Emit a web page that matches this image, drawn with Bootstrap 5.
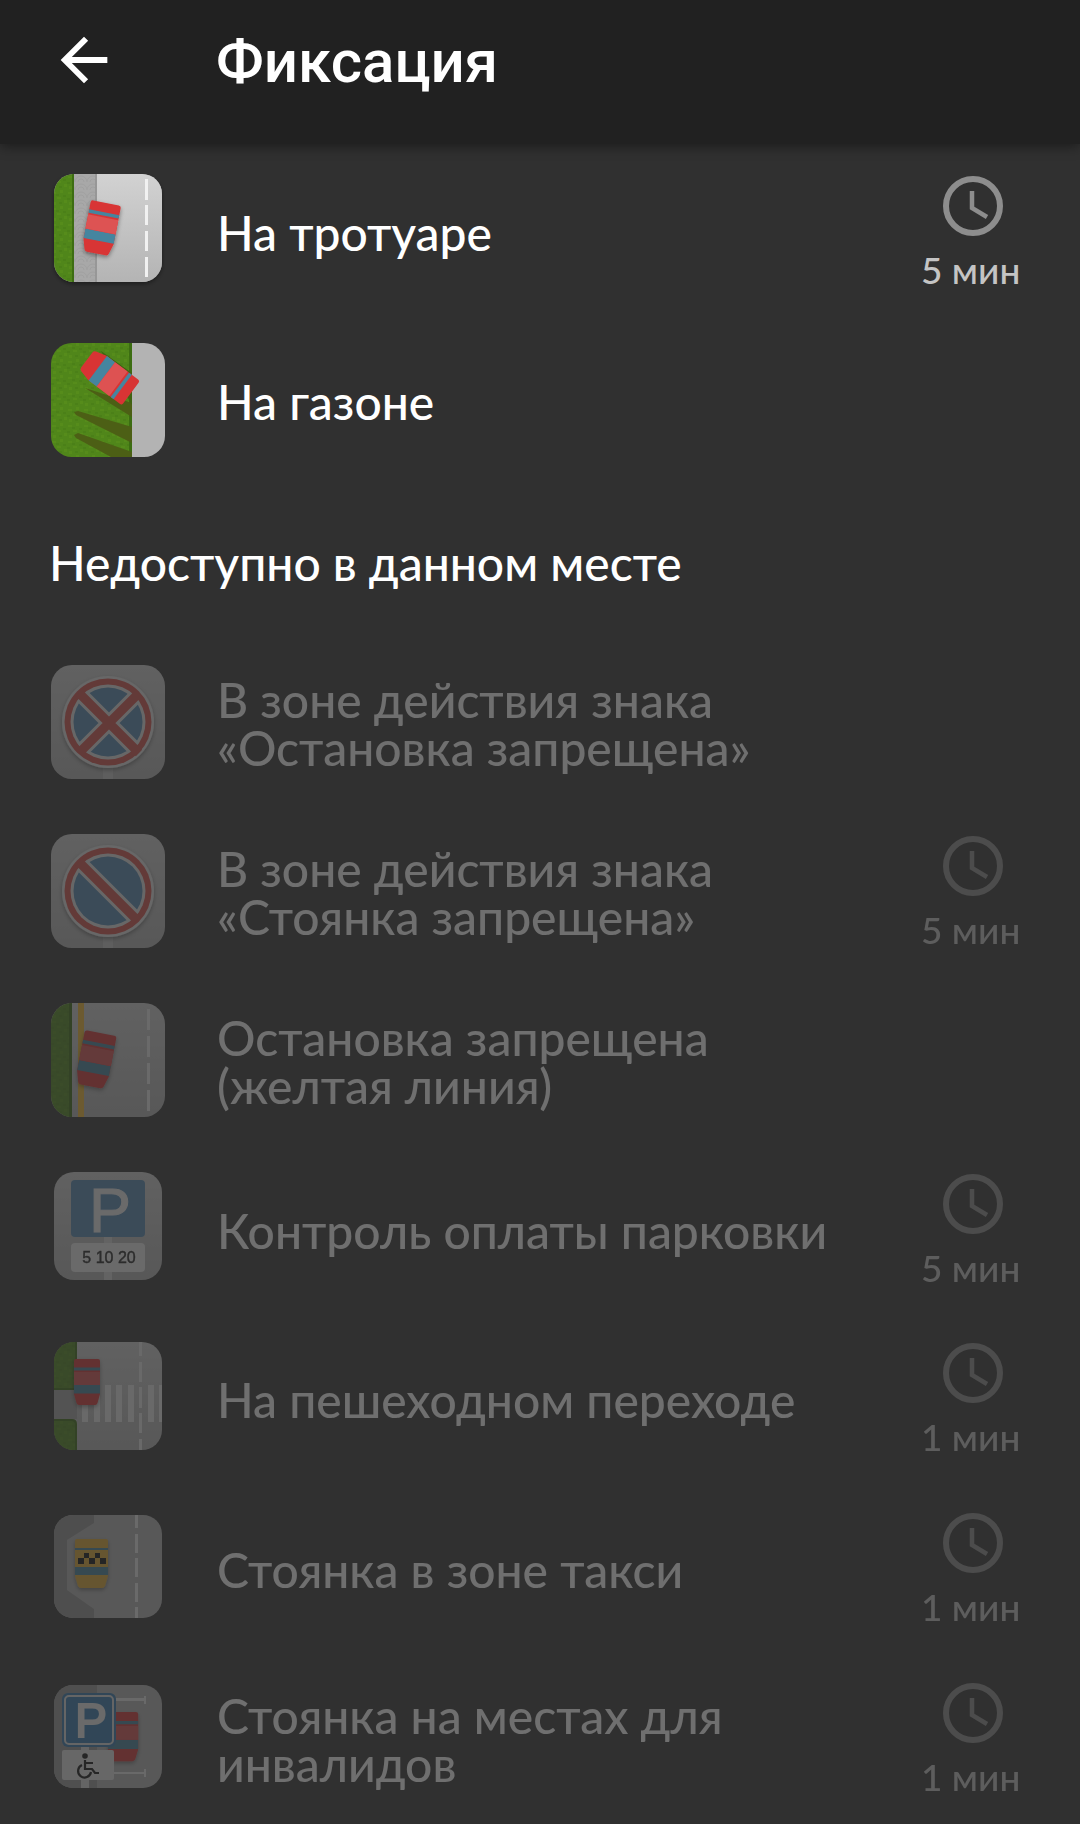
<!DOCTYPE html>
<html lang="ru" data-bs-theme="dark">
<head>
<meta charset="utf-8">
<meta name="viewport" content="width=device-width, initial-scale=1">
<title>Фиксация</title>
<link rel="stylesheet" href="https://cdn.jsdelivr.net/npm/bootstrap@5.3.0/dist/css/bootstrap.min.css">
<style>
body { background: #303030; color: #fff; font-family: Lato, "Noto Sans", sans-serif; }
.topbar { background: #212121; height: 144px; padding: 0 49px 24px; box-shadow: 0 2px 12px rgba(0,0,0,.45); position: relative; }
.topbar h1 { font: 500 60px/72px Roboto, sans-serif; margin-left: 97px; padding-top: 4px; }
.back-btn { width: 70px; height: 70px; }
.violations { padding-top: 3px; }
.violations .list-group-item { height: 169px; padding: 2px 56px 0 51px; background: transparent; color: #fff; }
.violations .tall { height: 170px; }
.violations .list-group-item:disabled { opacity: .3; }
.tile { width: 114px; height: 114px; margin-top: 25px; }
.caption-text { font-size: 48px; line-height: 48px; font-weight: 500; margin-left: 52px; }
.limit { width: 103px; font-size: 37px; line-height: 44px; font-weight: 500; color: #c4c4c4; padding-top: 2px; }
.limit svg { color: #8d8d8d; margin-bottom: 12px; }
.section-title { font-size: 48px; line-height: 57px; font-weight: 500; padding: 49px 49px 47px; }
</style>
<script src="https://cdn.jsdelivr.net/npm/bootstrap@5.3.0/dist/js/bootstrap.bundle.min.js"></script>
</head>
<body>
<svg width="0" height="0" class="position-absolute" aria-hidden="true">
  <defs>
    <linearGradient id="road" x1="0" y1="0" x2="0" y2="1"><stop offset="0" stop-color="#d2d2d2"/><stop offset="1" stop-color="#b4b4b4"/></linearGradient>
    <pattern id="grass" width="16" height="16" patternUnits="userSpaceOnUse">
      <rect width="16" height="16" fill="#50861a"/>
      <path d="M1 2h4v2H1zM9 0h3v3H9zM6 7h4v2H6zM13 10h3v3h-3zM2 12h3v3H2z" fill="#568c1b"/>
      <path d="M5 4h3v2H5zM12 5h3v2h-3zM0 8h3v2H0zM8 12h3v2H8z" fill="#4b8018"/>
    </pattern>
    <pattern id="paving" width="12" height="8" patternUnits="userSpaceOnUse">
      <rect width="12" height="8" fill="#a8a8a8"/>
      <path d="M0 8a6 6 0 0 1 12 0M3 8a3 3 0 0 1 6 0" fill="none" stroke="#a0a0a0"/>
    </pattern>
    <clipPath id="full"><rect width="114" height="114" rx="21"/></clipPath>
    <clipPath id="inset"><rect x="3" width="108" height="108" rx="20"/></clipPath>
    <clipPath id="inset-low"><rect x="3" y="1" width="108" height="108" rx="20"/></clipPath>
    <clipPath id="inset-short"><rect x="3" y="4" width="108" height="103" rx="19"/></clipPath>
    <clipPath id="disc"><circle cx="57" cy="57" r="37"/></clipPath>
    <filter id="soft" x="-30%" y="-30%" width="160%" height="160%"><feDropShadow dx="0" dy="2" stdDeviation="2" flood-opacity=".4"/></filter>
    <g id="car">
      <path d="M2 0H24Q26 0 26 2V35L23.500 44Q23 46 21 46H5Q3 46 2.500 44L0 35V2Q0 0 2 0Z" fill="#d83434"/>
      <path d="M0 8.500H26V11.500H0ZM0 26H26V34.500H0Z" fill="#45859f"/>
      <path d="M0 13H26V26H0Z" fill="#dd5252"/>
    </g>
    <symbol id="clock" viewBox="0 0 60 60">
      <circle cx="30" cy="30" r="27" fill="none" stroke="currentColor" stroke-width="6"/>
      <path d="M29 15V32L44 41" fill="none" stroke="currentColor" stroke-width="4.500"/>
    </symbol>
  </defs>
</svg>

<header class="topbar d-flex align-items-center">
  <button type="button" class="back-btn btn border-0 p-0 d-flex" aria-label="Назад">
    <svg width="70" height="70" viewBox="0 0 24 24" fill="#fff"><path d="M20 11H7.830l5.590-5.590L12 4l-8 8 8 8 1.410-1.410L7.830 13H20v-2z"/></svg>
  </button>
  <h1 class="mb-0">Фиксация</h1>
</header>

<main class="violations">
  <div class="list-group list-group-flush">
    <button type="button" class="list-group-item border-0 d-flex align-items-center text-start">
      <svg class="tile align-self-start flex-shrink-0" viewBox="0 0 114 114" aria-hidden="true">
        <rect x="3" width="108" height="108" rx="20" fill="#999" filter="url(#soft)"/>
        <g clip-path="url(#inset)">
          <path d="M46 0H111V108H46Z" fill="url(#road)"/>
          <path d="M23 0H46V108H23Z" fill="url(#paving)"/>
          <path d="M44 0H46V108H44Z" fill="#979797"/>
          <path d="M3 0H23V108H3Z" fill="url(#grass)"/>
          <path d="M21 0H23V108H21Z" fill="#3d6d12"/>
          <path d="M94 5h3v21h-3zM94 31h3v20h-3zM94 57h3v20h-3zM94 83h3v20h-3z" fill="#f1f1f1"/>
        </g>
        <g filter="url(#soft)"><use href="#car" transform="translate(40 26) rotate(11) scale(1.180 1.120)"/></g>
      </svg>
      <span class="caption-text flex-grow-1">На тротуаре</span>
      <span class="limit flex-shrink-0"><svg class="d-block mx-auto" width="60" height="60"><use href="#clock"/></svg>5 мин</span>
    </button>
    <button type="button" class="list-group-item border-0 d-flex align-items-center text-start">
      <svg class="tile align-self-start flex-shrink-0" viewBox="0 0 114 114" aria-hidden="true">
        <g clip-path="url(#full)">
          <path d="M0 0H81V114H0Z" fill="url(#grass)"/>
          <path d="M78 0H81V114H78Z" fill="#3c6d12"/>
          <path d="M34 45L81 60V74ZM23 69L27 68 81 84V100L25 72ZM23 92L27 90 81 109V114H60L25 95Z" fill="#4c5f15"/>
          <path d="M50 8L81 30V62Z" fill="#3f6313"/>
          <path d="M81 0H114V114H81Z" fill="#b3b3b3"/>
        </g>
        <use href="#car" transform="translate(89 38) rotate(127) scale(1.170 1.200)"/>
      </svg>
      <span class="caption-text flex-grow-1">На газоне</span>
    </button>
  </div>

  <h2 class="section-title mb-0">Недоступно в данном месте</h2>

  <div class="list-group list-group-flush">
    <button type="button" disabled class="list-group-item border-0 d-flex align-items-center text-start">
      <svg class="tile align-self-start flex-shrink-0" viewBox="0 0 114 114" aria-hidden="true">
        <rect width="114" height="114" rx="21" fill="url(#road)"/>
        <path d="M52 100H62V114H52Z" fill="#c8c8c8"/>
        <circle cx="57" cy="57" r="46" fill="#e6e6e6" filter="url(#soft)"/>
        <circle cx="57" cy="57" r="43.500" fill="#da514b"/>
        <circle cx="57" cy="57" r="37.500" fill="#e6e6e6"/>
        <circle cx="57" cy="57" r="34.500" fill="#558ab5"/>
        <path d="M28 28L88 88M88 28L28 88" stroke="#e6e6e6" stroke-width="15" clip-path="url(#disc)"/>
        <path d="M28 28L88 88M88 28L28 88" stroke="#da514b" stroke-width="9"/>
      </svg>
      <span class="caption-text flex-grow-1">В зоне действия знака<br>«Остановка запрещена»</span>
    </button>
    <button type="button" disabled class="list-group-item border-0 d-flex align-items-center text-start">
      <svg class="tile align-self-start flex-shrink-0" viewBox="0 0 114 114" aria-hidden="true">
        <rect width="114" height="114" rx="21" fill="url(#road)"/>
        <path d="M52 100H62V114H52Z" fill="#c8c8c8"/>
        <circle cx="57" cy="57" r="46" fill="#e6e6e6" filter="url(#soft)"/>
        <circle cx="57" cy="57" r="43.500" fill="#da514b"/>
        <circle cx="57" cy="57" r="37.500" fill="#e6e6e6"/>
        <circle cx="57" cy="57" r="34.500" fill="#558ab5"/>
        <path d="M28 28L88 88" stroke="#e6e6e6" stroke-width="15" clip-path="url(#disc)"/>
        <path d="M28 28L86 86" stroke="#da514b" stroke-width="9"/>
      </svg>
      <span class="caption-text flex-grow-1">В зоне действия знака<br>«Стоянка запрещена»</span>
      <span class="limit flex-shrink-0"><svg class="d-block mx-auto" width="60" height="60"><use href="#clock"/></svg>5 мин</span>
    </button>
    <button type="button" disabled class="list-group-item border-0 d-flex align-items-center text-start">
      <svg class="tile align-self-start flex-shrink-0" viewBox="0 0 114 114" aria-hidden="true">
        <g clip-path="url(#full)">
          <path d="M0 0H114V114H0Z" fill="url(#road)"/>
          <path d="M0 0H21V114H0Z" fill="url(#grass)"/>
          <path d="M18 0H21V114H18Z" fill="#3d6d12"/>
          <path d="M27 0H33V114H27Z" fill="#f5bc30"/>
          <path d="M96 6h3v21h-3zM96 33h3v21h-3zM96 60h3v21h-3zM96 87h3v21h-3z" fill="#f1f1f1"/>
        </g>
        <g filter="url(#soft)"><use href="#car" transform="translate(34 27) rotate(11) scale(1.240 1.180)"/></g>
      </svg>
      <span class="caption-text flex-grow-1">Остановка запрещена<br>(желтая линия)</span>
    </button>
    <button type="button" disabled class="list-group-item border-0 d-flex align-items-center text-start">
      <svg class="tile align-self-start flex-shrink-0" viewBox="0 0 114 114" aria-hidden="true">
        <rect x="3" width="108" height="108" rx="20" fill="url(#road)"/>
        <path d="M53 60H61V108H53Z" fill="#dadada"/>
        <rect x="20" y="8" width="74" height="57" rx="4" fill="#558ab5"/>
        <text x="38" y="60" font-family="Liberation Sans, sans-serif" font-size="63" fill="#f0f0f0" stroke="#f0f0f0">P</text>
        <rect x="20" y="71" width="74" height="29" rx="4" fill="#f0f0f0"/>
        <text x="58" y="91" text-anchor="middle" font-family="Liberation Sans, sans-serif" font-size="16" fill="#222" stroke="#222" stroke-width=".4">5 10 20</text>
      </svg>
      <span class="caption-text flex-grow-1">Контроль оплаты парковки</span>
      <span class="limit flex-shrink-0"><svg class="d-block mx-auto" width="60" height="60"><use href="#clock"/></svg>5 мин</span>
    </button>
    <button type="button" disabled class="list-group-item tall border-0 d-flex align-items-center text-start">
      <svg class="tile align-self-start flex-shrink-0" viewBox="0 0 114 114" aria-hidden="true">
        <g clip-path="url(#inset-low)">
          <path d="M3 1H111V109H3Z" fill="url(#road)"/>
          <path d="M3 49H26V78H3Z" fill="#a4a4a4"/>
          <path d="M3 1H26V49H3ZM3 78H21Q26 78 26 83V109H3Z" fill="#3d6d12"/>
          <path d="M3 1H24V47H3ZM3 80H20Q24 80 24 84V109H3Z" fill="url(#grass)"/>
          <path d="M31 44h6v37h-6zM43 44h6v37h-6zM54 44h6v37h-6zM65 44h6v37h-6zM77 44h6v37h-6zM97 44h6v37h-6zM108 44h3v37h-3zM88 1h3v14h-3zM88 21h3v20h-3zM88 46h3v21h-3zM88 72h3v20h-3zM88 98h3v11h-3z" fill="#ececec"/>
        </g>
        <g filter="url(#soft)"><use href="#car" transform="translate(23 18)"/></g>
      </svg>
      <span class="caption-text flex-grow-1">На пешеходном переходе</span>
      <span class="limit flex-shrink-0"><svg class="d-block mx-auto" width="60" height="60"><use href="#clock"/></svg>1 мин</span>
    </button>
    <button type="button" disabled class="list-group-item tall border-0 d-flex align-items-center text-start">
      <svg class="tile align-self-start flex-shrink-0" viewBox="0 0 114 114" aria-hidden="true">
        <g clip-path="url(#inset-short)">
          <path d="M3 4H111V107H3Z" fill="#b6b6b6"/>
          <path d="M3 4H43V12L16 29V79L43 98V107H3Z" fill="#959595"/>
          <path d="M84 4h3v13h-3zM84 23h3v19h-3zM84 47h3v19h-3zM84 72h3v19h-3zM84 96h3v11h-3z" fill="#f1f1f1"/>
        </g>
        <g filter="url(#soft)">
          <path d="M26 28H55Q57 28 57 30V65L54 75Q53 77 51 77H30Q28 77 27 75L24 65V30Q24 28 26 28Z" fill="#e3ab30"/>
          <path d="M24 37H57V39H24ZM24 56H57V64H24Z" fill="#45859f"/>
          <path d="M33 42h5v5h-5zM44 42h5v5h-5zM27 47h6v6h-6zM38 47h6v6h-6zM49 47h6v6h-6z" fill="#111"/>
        </g>
      </svg>
      <span class="caption-text flex-grow-1">Стоянка в зоне такси</span>
      <span class="limit flex-shrink-0"><svg class="d-block mx-auto" width="60" height="60"><use href="#clock"/></svg>1 мин</span>
    </button>
    <button type="button" disabled class="list-group-item tall border-0 d-flex align-items-center text-start">
      <svg class="tile align-self-start flex-shrink-0" viewBox="0 0 114 114" aria-hidden="true">
        <g clip-path="url(#inset-short)">
          <path d="M3 4H111V107H3Z" fill="#b6b6b6"/>
          <path d="M3 4H46V107H3Z" fill="#979797"/>
          <path d="M62 17h31v-2h2v8h-2v-3H62zM62 91h31v-3h2v8h-2v-3H62z" fill="#ececec"/>
          <path d="M30 60h8v47h-8z" fill="#dcdcdc"/>
        </g>
        <g filter="url(#soft)"><use href="#car" transform="translate(57 31) scale(1.160 1.070)"/></g>
        <rect x="11" y="12" width="54" height="54" rx="6" fill="#367bb0"/>
        <rect x="14" y="15" width="48" height="48" rx="4" fill="none" stroke="#e0e0e0" stroke-width="2"/>
        <text x="24" y="56" font-family="Liberation Sans, sans-serif" font-size="48" fill="#f0f0f0" stroke="#f0f0f0" stroke-width="2">P</text>
        <rect x="11" y="69" width="52" height="30" rx="2" fill="#e6e6e6"/>
        <circle cx="34" cy="75" r="2.800" fill="#111"/>
        <path d="M34 79V88H41L44 92H48M35 82H42M31 84A6.500 6.500 0 1 0 40 91" fill="none" stroke="#111" stroke-width="2.200"/>
      </svg>
      <span class="caption-text flex-grow-1">Стоянка на местах для<br>инвалидов</span>
      <span class="limit flex-shrink-0"><svg class="d-block mx-auto" width="60" height="60"><use href="#clock"/></svg>1 мин</span>
    </button>
  </div>
</main>
</body>
</html>
